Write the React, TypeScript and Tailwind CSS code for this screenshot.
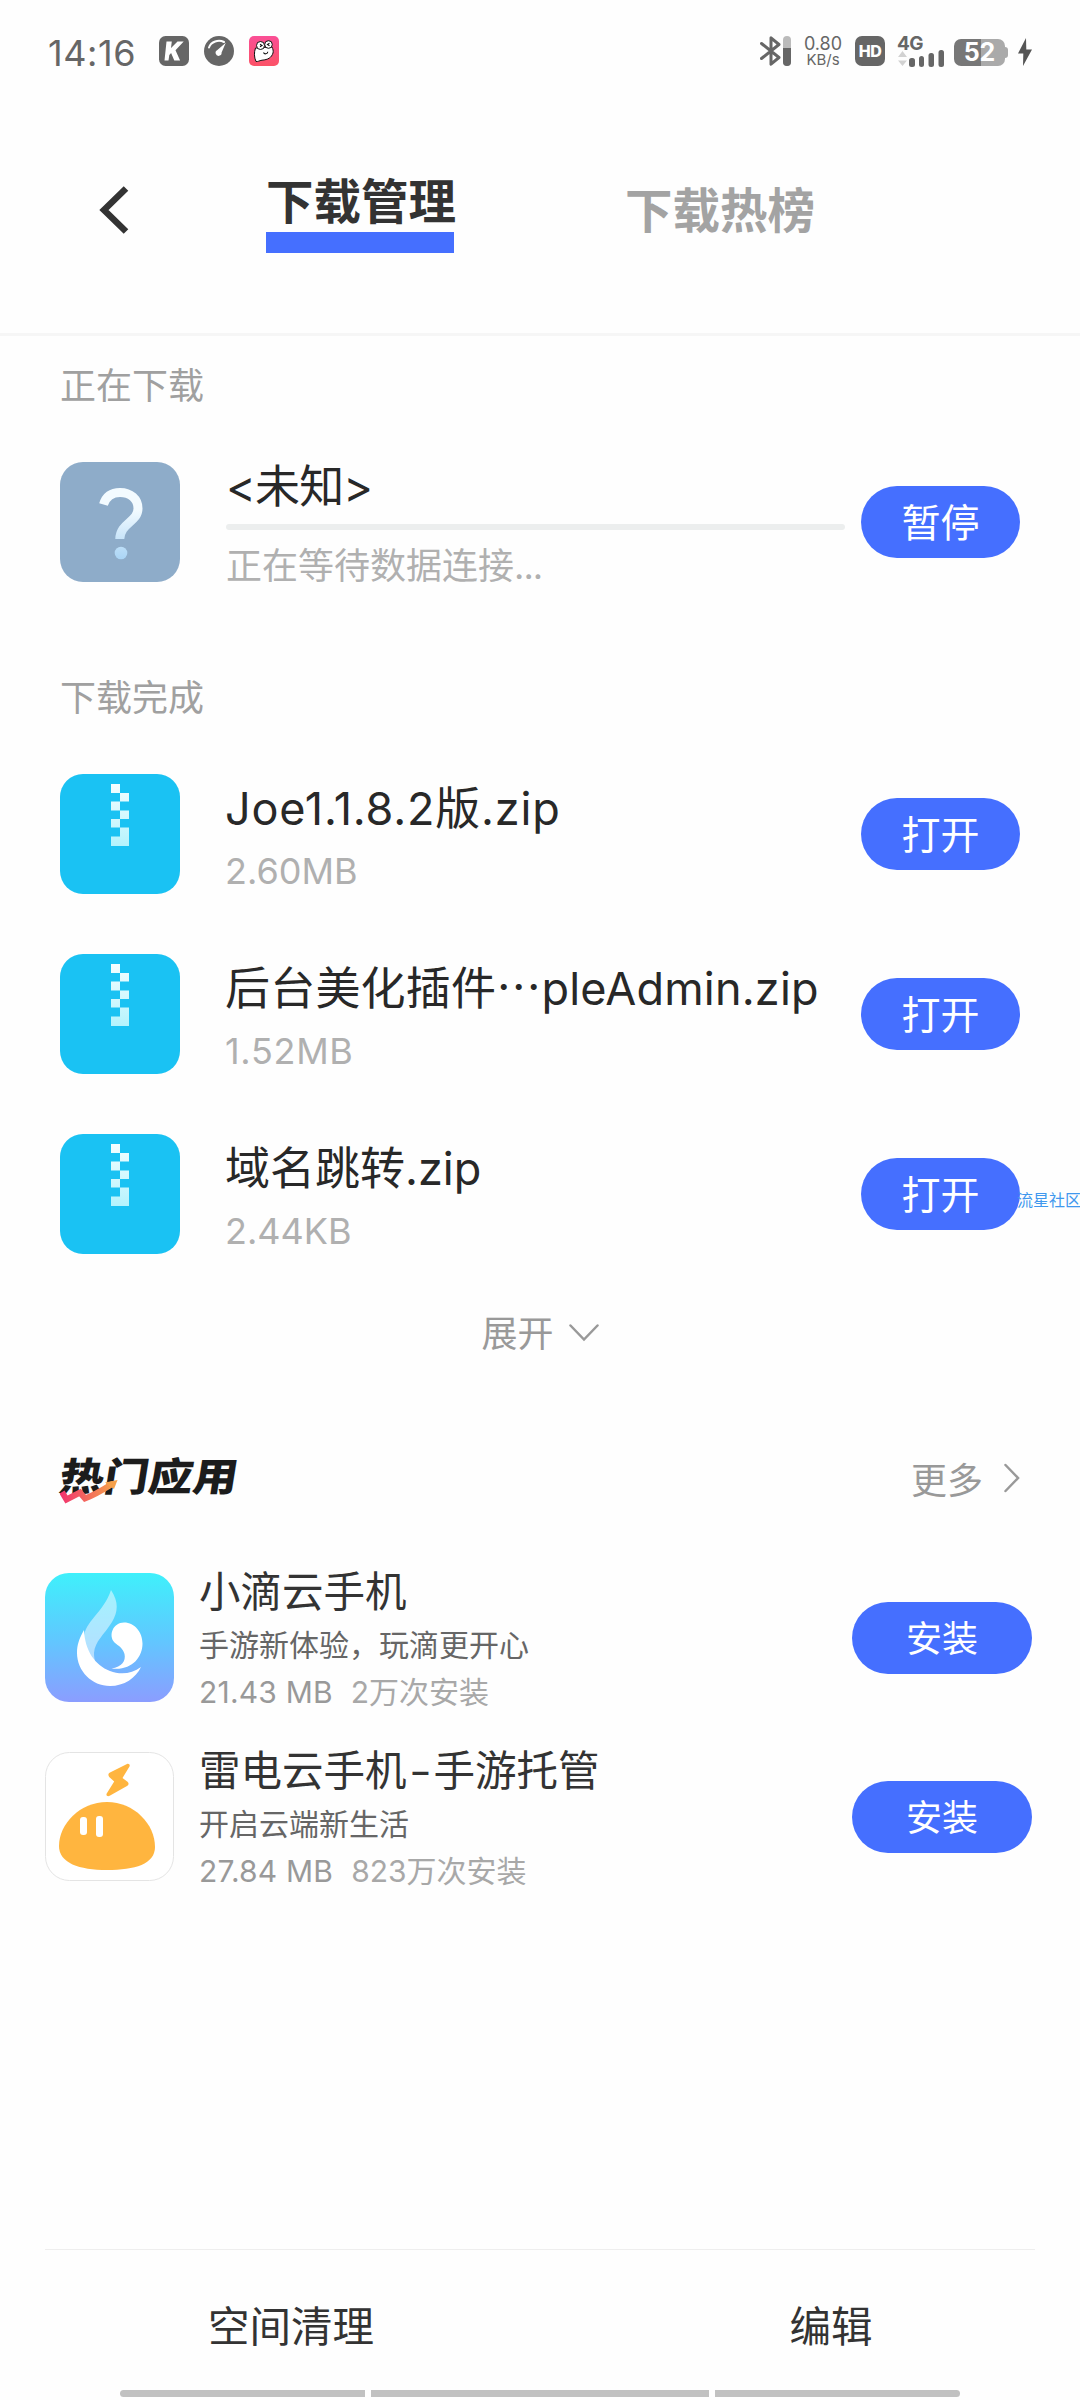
import type { ReactNode } from "react";

interface DownloadedFile {
  name: string;
  size: string;
  nameClass?: string;
  sizeClass?: string;
}

interface HotApp {
  name: ReactNode;
  slogan: string;
  size: string;
  installs: string;
  icon: ReactNode;
}

const StatusBar = () => (
  <div className="flex h-[102px] shrink-0 items-center pl-[48px] pr-[48px] text-[#666]">
    <span className="w-[111px] pt-[4px] text-[36px] leading-none tracking-[0.6px]">14:16</span>

    <div className="flex gap-[15px]">
      <svg className="h-[30px] w-[30px]" viewBox="0 0 30 30">
        <rect width="30" height="30" rx="6.5" fill="#666" />
        <path d="M7.5 5.5h5.300l-.8 6.500 6.500-6.500h6.200l-8.200 8.700 4.600 10.300h-5.800l-3.200-7.500-1.800 1.900-.8 5.600H5.500z" fill="#fff" />
      </svg>
      <svg className="h-[30px] w-[30px]" viewBox="0 0 30 30">
        <circle cx="15" cy="15" r="15" fill="#666" />
        <path d="M5 11.5C7 5.5 14.5 3.3 20 6" fill="none" stroke="#fff" strokeWidth="2" strokeLinecap="round" />
        <path d="M21.8 6.8 17.6 16.6a3 3 0 1 1-4.2-2.5z" fill="#fff" />
      </svg>
      <svg className="h-[30px] w-[30px]" viewBox="0 0 30 30">
        <defs>
          <linearGradient id="pinkBg" x1="0" y1="0" x2="0" y2="1">
            <stop offset="0" stopColor="#fa4f96" />
            <stop offset="1" stopColor="#fb5266" />
          </linearGradient>
        </defs>
        <rect width="30" height="30" rx="5" fill="url(#pinkBg)" />
        <path d="M6.5 12c-1.500 4.500-1.500 9 .5 13.500 2 .3 3-.8 6-1.300 6-.5 9.500-2.500 11-7.200.5-2 0-4-1-6z" fill="#fff" stroke="#111" strokeWidth="1" />
        <circle cx="11.500" cy="9.500" r="4" fill="#fff" stroke="#111" />
        <circle cx="19.500" cy="8.500" r="3.800" fill="#fff" stroke="#111" />
        <path d="M11 8.300l2 1.200-2 1.300M20.500 7.200l-2 1.200 2 1.300M14.500 16.500c.8 2 4 1.800 4.300-.8" fill="none" stroke="#111" strokeWidth="1.100" />
      </svg>
    </div>

    <div className="ml-auto flex items-center">
      <svg className="h-[30px] w-[32px]" viewBox="0 0 32 30">
        <path d="M1.500 7.500 19 21.500 11 28.200V1.800L19 8.500 1.500 22.500" fill="none" stroke="#666" strokeWidth="3" strokeLinejoin="round" strokeLinecap="round" />
        <rect x="23" y="0" width="8" height="30" rx="4" fill="#bbb" />
        <path d="M23 12h8v14a4 4 0 0 1-8 0z" fill="#666" />
      </svg>
      <div className="ml-[11px] w-[40px] text-center">
        <div className="text-[18px] leading-[17px]">0.80</div>
        <div className="text-[15px] leading-[15px]">KB/s</div>
      </div>
      <div className="ml-[12px] flex h-[30px] w-[30px] items-center justify-center rounded-[7px] bg-[#666] text-[16px] leading-none font-extrabold tracking-[-0.5px] text-white">
        HD
      </div>
      <div className="ml-[12px] h-[30px] w-[48px]">
        <div className="text-[19px] leading-[15px] font-bold tracking-[-0.5px]">4G</div>
        <svg className="h-[16px] w-[48px] overflow-visible" viewBox="0 0 48 16">
          <path d="M1 6 5.500 0 10 6zM1 9.500h9L5.500 15z" fill="#d2d2d2" />
          <g fill="#666">
            <rect x="12" y="7" width="6" height="9" rx="2.500" />
            <rect x="22" y="5" width="5" height="11" rx="2.500" />
            <rect x="31.500" y="2" width="5.500" height="14" rx="2.500" />
            <rect x="41.500" y="-1" width="5.500" height="17" rx="2.500" />
          </g>
        </svg>
      </div>
      <div className="mt-[3px] ml-[9px] flex items-center">
        <div className="flex h-[27px] w-[51px] items-center justify-center rounded-[7px] bg-linear-to-r from-[#777] from-52% to-[#aaa] to-52% text-[25px] leading-none font-bold text-white">
          52
        </div>
        <div className="h-[11px] w-[3px] rounded-r-[3px] bg-[#aaa]" />
      </div>
      <svg className="mt-[2px] ml-[10px] h-[28px] w-[14px]" viewBox="0 0 14 28">
        <path d="M8 0 0 15.500h5.300L5 28l9-16.500H8.300z" fill="#555" />
      </svg>
    </div>
  </div>
);

const Header = () => (
  <div className="flex h-[234px] shrink-0 items-start border-b-[3px] border-[#f6f6f6] pl-[98px]">
    <svg className="mt-[83px] h-[50px] w-[32px]" viewBox="0 0 32 50">
      <path d="M28 3.500 6 25l22 21.500" fill="none" stroke="#333" strokeWidth="6.500" />
    </svg>
    <div className="mt-[70px] ml-[136px] w-[188px] whitespace-nowrap">
      <div className="h-[60px] text-[47.500px] leading-[59px] font-bold text-[#333]">下载管理</div>
      <div className="h-[21px] bg-[#456fff]" />
    </div>
    <div className="mt-[79px] ml-[171px] text-[47.500px] leading-[60px] font-bold text-[#a3a3a3]">下载热榜</div>
  </div>
);

const PillButton = ({ children }: { children: ReactNode }) => (
  <button className="h-[72px] w-[159px] shrink-0 rounded-full bg-[#456fff] text-[39px] leading-[74px] text-white">
    {children}
  </button>
);

const SectionLabel = ({ children }: { children: ReactNode }) => (
  <div className="flex h-[92px] shrink-0 items-center px-[60px] text-[36px] leading-none text-[#a0a0a0]">{children}</div>
);

const UnknownIcon = () => (
  <svg className="h-[120px] w-[120px] shrink-0" viewBox="0 0 120 120">
    <defs>
      <linearGradient id="question" x1="0" y1="26" x2="0" y2="98" gradientUnits="userSpaceOnUse">
        <stop offset="0.3" stopColor="#f3fbff" />
        <stop offset="1" stopColor="#a9d4f5" />
      </linearGradient>
    </defs>
    <rect width="120" height="120" rx="23" fill="#8eacc9" />
    <path d="M43.500 42.500C46 34.500 52 30.500 60 30.500c10.500 0 18 6.500 18 16C78 60 60 61 59.800 77" fill="none" stroke="url(#question)" strokeWidth="9" />
    <circle cx="61" cy="91" r="6.300" fill="url(#question)" />
  </svg>
);

const ZipIcon = () => (
  <svg className="h-[120px] w-[120px] shrink-0" viewBox="0 0 120 120">
    <defs>
      <linearGradient id="zipper" x1="0" y1="10" x2="0" y2="72" gradientUnits="userSpaceOnUse">
        <stop offset="0" stopColor="#f6feff" />
        <stop offset="1" stopColor="#b4f3fd" />
      </linearGradient>
    </defs>
    <rect width="120" height="120" rx="23" fill="#1ac2f3" />
    <path
      d="M51 10h9v9h-9zM60 19h9v8.500h-9zM51 27.500h9v9h-9zM60 36.500h9v8.500h-9zM51 45h9v8.500h-9zM60 53.500h9V72H51v-9.500h9z"
      fill="url(#zipper)"
    />
  </svg>
);

const FileRow = ({ file }: { file: DownloadedFile }) => (
  <div className="flex h-[180px] shrink-0 items-center px-[60px]">
    <ZipIcon />
    <div className="ml-[45px] flex-1 pt-[8px] whitespace-nowrap">
      <div className={`text-[45px] leading-[66px] text-[#282828] ${file.nameClass ?? ""}`}>{file.name}</div>
      <div className={`text-[36px] leading-[58px] text-[#b0b0b0] ${file.sizeClass ?? ""}`}>{file.size}</div>
    </div>
    <PillButton>打开</PillButton>
  </div>
);

const DropIcon = () => (
  <svg className="h-[129px] w-[129px] shrink-0" viewBox="0 0 129 129">
    <defs>
      <linearGradient id="dropBg" x1="0" y1="0" x2="0" y2="1">
        <stop offset="0" stopColor="#3ff0fb" />
        <stop offset="0.5" stopColor="#5fc9ff" />
        <stop offset="1" stopColor="#8b9dff" />
      </linearGradient>
    </defs>
    <rect width="129" height="129" rx="24" fill="url(#dropBg)" />
    <path d="M39 57C34 66 32 72 32 80c0 18 15 33 33 33 14 0 26-8 31-19-9 7-21 8-31 4C50 92 40 78 39 57z" fill="#fff" />
    <path d="M66 17c8 12 7 22 1 32-8 13-17 19-18 31 0 7 2 12 5 16-10-7-15-19-15-31 0-16 20-26 27-48z" fill="#fff" fillOpacity="0.5" />
    <path d="M79 49.500c11 0 18.500 10 18.500 21C97.500 85 86 98 66.500 95.500 77 94 81 88 79.500 81c-1.500-6-6-8-10-11.500-6.500-7-1.500-20 9.500-20z" fill="#fff" />
  </svg>
);

const ThunderIcon = () => (
  <svg className="h-[129px] w-[129px] shrink-0" viewBox="0 0 129 129">
    <rect x="0.500" y="0.500" width="128" height="128" rx="24" fill="#fff" stroke="#e4e4e4" />
    <path
      d="M82 12 65 20.500c-2 1-2 3-.8 4.500l5 4.500-7.500 12c-1 2 1 3.500 3 2.300L82 34c2-1.300 2-3 .5-4.300L77.500 26l7-11.500c.8-1.800-.7-3.200-2.500-2.500z"
      fill="#ffb53f"
    />
    <path d="M62 50c27 0 48 22 48 45 0 17-20 23-48 23S14 111 14 94c0-22 21-44 48-44z" fill="#ffb53f" />
    <rect x="35" y="65" width="7" height="18" rx="3" fill="#fff" />
    <rect x="51" y="64" width="7" height="21" rx="3" fill="#fff" />
  </svg>
);

const AppRow = ({ app }: { app: HotApp }) => (
  <div className="flex h-[179px] shrink-0 items-center pr-[48px] pl-[45px]">
    {app.icon}
    <div className="ml-[25px] flex-1 pt-[2px] whitespace-nowrap">
      <div className="text-[41.500px] leading-[60px] text-[#333]">{app.name}</div>
      <div className="text-[30px] leading-[47px] text-[#666]">{app.slogan}</div>
      <div className="flex gap-[18px] text-[30px] leading-[47px]">
        <span className="tracking-[0.2px] text-[#999]">{app.size}</span>
        <span className="text-[#a8a8a8]">{app.installs}</span>
      </div>
    </div>
    <button className="h-[72px] w-[180px] shrink-0 rounded-full bg-[#456fff] text-[36px] leading-[74px] text-white">
      安装
    </button>
  </div>
);

const files: DownloadedFile[] = [
  { name: "Joe1.1.8.2版.zip", size: "2.60MB", nameClass: "tracking-[0.8px]" },
  { name: "后台美化插件⋯pleAdmin.zip", size: "1.52MB", nameClass: "tracking-[0.2px]", sizeClass: "tracking-[0.7px]" },
  { name: "域名跳转.zip", size: "2.44KB" },
];

const hotApps: HotApp[] = [
  { name: "小滴云手机", slogan: "手游新体验，玩滴更开心", size: "21.43 MB", installs: "2万次安装", icon: <DropIcon /> },
  {
    name: (
      <>
        雷电云手机<span className="mx-[4px] inline-block scale-x-120">-</span>手游托管
      </>
    ),
    slogan: "开启云端新生活",
    size: "27.84 MB",
    installs: "823万次安装",
    icon: <ThunderIcon />,
  },
];

const App = () => {
  return (
    <div className="relative flex h-[2400px] w-[1080px] flex-col overflow-hidden bg-[#fefefe] font-[Inter,'Noto_Sans_CJK_SC',sans-serif]">
      <StatusBar />
      <Header />

      <div className="mt-[4px] shrink-0">
        <SectionLabel>正在下载</SectionLabel>
      </div>
      <div className="mt-[3px] flex h-[174px] shrink-0 items-center px-[60px]">
        <UnknownIcon />
        <div className="ml-[46px] w-[619px]">
          <div className="pt-[4px] text-[45px] leading-[66px] tracking-[-0.8px] text-[#282828]">&lt;未知&gt;</div>
          <div className="mt-[4px] h-[6px] rounded-full bg-[#eceeee]" />
          <div className="mt-[8px] text-[36px] leading-[56px] text-[#b0b0b0]">
            正在等待数据连接<span className="tracking-[-1px]">...</span>
          </div>
        </div>
        <div className="ml-auto">
          <PillButton>暂停</PillButton>
        </div>
      </div>

      <div className="mt-[43px] shrink-0">
        <SectionLabel>下载完成</SectionLabel>
      </div>
      {files.map((file) => (
        <FileRow key={file.name} file={file} />
      ))}

      <div className="flex h-[100px] shrink-0 items-center justify-center gap-[15px] text-[36px] leading-none text-[#999]">
        <span>展开</span>
        <svg className="-mt-[3px] h-[18px] w-[30px]" viewBox="0 0 30 18">
          <path d="M1.500 1.500 15 15.500l13.500-14" fill="none" stroke="#999" strokeWidth="2.500" strokeLinecap="round" />
        </svg>
      </div>

      <div className="mt-[44px] flex h-[100px] shrink-0 items-center justify-between px-[60px]">
        <div className="relative">
          <div className="-mt-[3px] origin-center -skew-x-8 scale-y-88 text-[44.500px] leading-[50px] font-black text-[#1c1c1c]">
            热门应用
          </div>
          <svg className="absolute top-[25px] left-0 h-[24px] w-[58px]" viewBox="0 0 58 24">
            <defs>
              <linearGradient id="trend" x1="0" y1="0" x2="1" y2="0">
                <stop offset="0" stopColor="#f2366e" />
                <stop offset="1" stopColor="#f5a04a" />
              </linearGradient>
            </defs>
            <path d="M2 12 6.500 19.500 20 12.500l5 6C36 14.500 45 8.500 53 3.500" fill="none" stroke="url(#trend)" strokeWidth="6" />
            <path d="M45 2.500 57.500 0 54 9z" fill="#f5a04a" />
          </svg>
        </div>
        <div className="flex items-center gap-[21px] text-[36px] leading-none text-[#999]">
          <span className="pt-[5px]">更多</span>
          <svg className="h-[30px] w-[16px]" viewBox="0 0 16 30">
            <path d="M1.500 2 14 15 1.500 28" fill="none" stroke="#999" strokeWidth="2.500" strokeLinecap="round" />
          </svg>
        </div>
      </div>

      <div className="mt-[20px] shrink-0">
        {hotApps.map((app) => (
          <AppRow key={app.slogan} app={app} />
        ))}
      </div>

      <div className="mx-[45px] mt-auto flex h-[141px] shrink-0 border-t border-[#eee] text-[41.500px] leading-[154px] text-[#333]">
        <div className="w-[492px] shrink-0 text-center">空间清理</div>
        <div className="ml-[48px] w-[492px] shrink-0 text-center">编辑</div>
      </div>
      <div className="mx-[120px] mb-[3px] flex h-[7px] shrink-0 gap-[6px]">
        <div className="w-[245px] rounded-l-full bg-[#c1c1c1]" />
        <div className="flex-1 bg-[#c1c1c1]" />
        <div className="w-[245px] rounded-r-full bg-[#c1c1c1]" />
      </div>

      {/* floating watermark, clipped by the screen edge */}
      <div className="absolute top-[1190px] left-[1017px] text-[16px] leading-[20px] whitespace-nowrap text-[#4098ee]">
        流星社区
      </div>
    </div>
  );
};

export default App;
